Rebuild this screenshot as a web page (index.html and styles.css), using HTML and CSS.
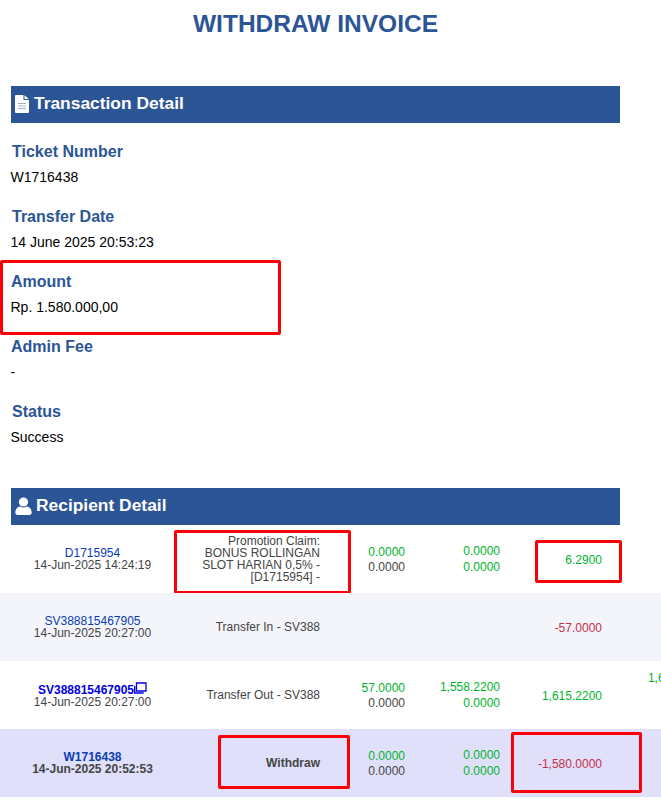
FILE: index.html
```html
<!DOCTYPE html>
<html lang="en">
<head>
<meta charset="utf-8">
<title>Withdraw Invoice</title>
<link rel="stylesheet" href="styles.css">
</head>
<body>
<main class="page">
  <h1 class="title">WITHDRAW INVOICE</h1>

  <h2 class="bar bar-first">
    <svg class="bar-icon" width="14" height="18" viewBox="0 0 14 18"><path fill="#fff" d="M1 0h7.500v5H14v12a1 1 0 0 1-1 1H1a1 1 0 0 1-1-1V1a1 1 0 0 1 1-1z"/><path fill="#fff" d="M9.500 0.200 13.800 4H9.500z"/><path fill="none" stroke="#9db2d2" stroke-width="1" d="M3 8.500h8M3 11h8M3 13.500h8"/></svg>
    <span>Transaction Detail</span>
  </h2>

  <section class="field">
    <h3 class="label">Ticket Number</h3>
    <p class="value">W1716438</p>
  </section>
  <section class="field">
    <h3 class="label">Transfer Date</h3>
    <p class="value">14 June 2025 20:53:23</p>
  </section>
  <section class="field">
    <h3 class="label label-tight">Amount</h3>
    <p class="value">Rp. 1.580.000,00</p>
    <div class="flag flag-amount"></div>
  </section>
  <section class="field">
    <h3 class="label label-tight">Admin Fee</h3>
    <p class="value">-</p>
  </section>
  <section class="field">
    <h3 class="label">Status</h3>
    <p class="value">Success</p>
  </section>

  <h2 class="bar bar-second">
    <svg class="bar-icon" width="17" height="18" viewBox="0 0 17 18"><circle cx="8.500" cy="5" r="4.600" fill="#fff"/><path fill="#fff" d="M0.300 15.500c0-3.600 2.600-6 4.700-6 1 .7 2.200 1.100 3.500 1.100s2.500-.4 3.500-1.100c2.100 0 4.700 2.400 4.700 6 0 1.500-1 2.500-2.300 2.500H2.600C1.300 18 .3 17 .3 15.500z"/></svg>
    <span>Recipient Detail</span>
  </h2>
</main>

<div class="ledger">
  <div class="row">
    <div class="cell ref"><a class="link">D1715954</a><br>14-Jun-2025 14:24:19</div>
    <div class="cell desc">Promotion Claim:<br>BONUS ROLLINGAN<br>SLOT HARIAN 0,5% -<br>[D1715954] -</div>
    <div class="cell num"><span class="pos">0.0000</span><br>0.0000</div>
    <div class="cell num wide"><span class="pos">0.0000</span><br><span class="pos">0.0000</span></div>
    <div class="cell num single pos">6.2900</div>
    <div class="cell num single neg">-6.2900</div>
    <div class="flag flag-promo"></div>
    <div class="flag flag-credit"></div>
  </div>
  <div class="row row-alt">
    <div class="cell ref"><a class="link">SV388815467905</a><br>14-Jun-2025 20:27:00</div>
    <div class="cell desc">Transfer In - SV388</div>
    <div class="cell num"></div>
    <div class="cell num wide"></div>
    <div class="cell num single neg">-57.0000</div>
    <div class="cell num single neg">-57.0000</div>
  </div>
  <div class="row">
    <div class="cell ref"><a class="link link-strong">SV388815467905<svg class="copy" width="13" height="12" viewBox="0 0 13 12"><path fill="none" stroke="#0000e0" stroke-width="1.300" d="M2.500 1h9.500v8H2.500zM0.700 4v7h9"/></svg></a><br>14-Jun-2025 20:27:00</div>
    <div class="cell desc">Transfer Out - SV388</div>
    <div class="cell num"><span class="pos">57.0000</span><br>0.0000</div>
    <div class="cell num wide"><span class="pos">1,558.2200</span><br><span class="pos">0.0000</span></div>
    <div class="cell num single pos">1,615.2200</div>
    <div class="cell num pos cell-raised">1,615.2200</div>
  </div>
  <div class="row row-current">
    <div class="cell ref strong"><a class="link">W1716438</a><br>14-Jun-2025 20:52:53</div>
    <div class="cell desc strong">Withdraw</div>
    <div class="cell num"><span class="pos">0.0000</span><br>0.0000</div>
    <div class="cell num wide"><span class="pos">0.0000</span><br><span class="pos">0.0000</span></div>
    <div class="cell num single neg">-1,580.0000</div>
    <div class="cell num single neg"></div>
    <div class="flag flag-withdraw"></div>
    <div class="flag flag-debit"></div>
  </div>
</div>
</body>
</html>
```

FILE: styles.css
```css
* { box-sizing: border-box; }

html, body {
  margin: 0;
  padding: 0;
  background: #fff;
  overflow-x: hidden;
}

body {
  font-family: "Liberation Sans", Arial, sans-serif;
  color: #000;
  width: 661px;
}

.page {
  padding: 0 41px 0 11px;
}

.title {
  margin: 0;
  padding-top: 10px;
  height: 86px;
  font-size: 24.5px;
  line-height: 28px;
  font-weight: 700;
  color: #2c5596;
  text-align: center;
}

.bar {
  margin: 0;
  height: 37px;
  display: flex;
  align-items: center;
  gap: 5px;
  padding: 0 0 2px 4px;
  background: #2c5596;
  color: #fff;
  font-size: 17.400px;
  font-weight: 700;
}

.bar-icon { flex: none; }

.bar-first { margin-bottom: 20px; }
.bar-second { margin-top: 20px; gap: 4px; }

.field {
  position: relative;
  height: 65px;
}

.label {
  margin: 0 0 8px 1px;
  font-size: 16px;
  line-height: 18px;
  font-weight: 700;
  color: #2c5596;
}

.label-tight { margin-left: 0; }

.value {
  margin: 0 0 0 -0.5px;
  font-size: 14px;
  line-height: 16px;
}

.flag {
  position: absolute;
  border: 3px solid #fb0007;
  border-radius: 2px;
  pointer-events: none;
}

.flag-amount { left: -11px; top: -13px; width: 281px; height: 75px; }
.flag-promo { left: 174px; top: 5px; width: 177px; height: 64px; }
.flag-credit { left: 535px; top: 15px; width: 87px; height: 43px; }
.flag-withdraw { left: 218px; top: 6px; width: 132px; height: 54px; }
.flag-debit { left: 511px; top: 3px; width: 131px; height: 61px; }

.ledger {
  width: 661px;
  overflow: hidden;
  font-size: 12px;
  line-height: 12px;
  color: #444;
}

.row {
  position: relative;
  display: grid;
  grid-template-columns: 185px 135px 85px 95px 102px 106px;
  width: 708px;
  height: 68px;
  background: #fff;
}

.row-alt { background: #f4f5fb; }
.row-current { background: #e0e0fb; }

.cell {
  display: block;
  align-self: center;
  text-align: right;
}

.ref { text-align: center; }

.num { line-height: 15px; padding-top: 1px; }
.wide { line-height: 16px; padding-top: 0; }
.single { padding-top: 2px; }

.cell-raised { align-self: start; padding-top: 10px; }

.strong { font-weight: 700; }

.link { color: #0a3db0; }
.link-strong { color: #0000e6; font-weight: 700; }

.pos { color: #00b32d; }
.neg { color: #c53045; }
```
